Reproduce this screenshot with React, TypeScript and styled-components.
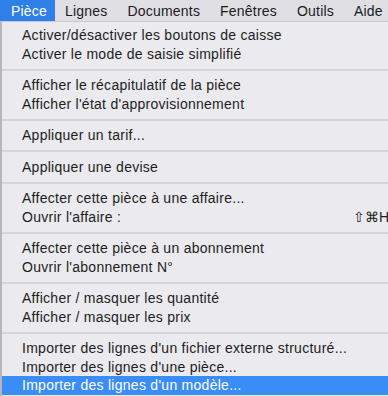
import React from 'react';
import styled, { createGlobalStyle } from 'styled-components';

const GlobalStyle = createGlobalStyle`
  html, body {
    margin: 0;
    padding: 0;
    background: #eaeaef;
    overflow: hidden;
  }
  body {
    font-family: "Liberation Sans", Arial, sans-serif;
    -webkit-font-smoothing: antialiased;
  }
`;

type Item = { label: string; shortcut?: string; active?: boolean };

const groups: Item[][] = [
  [
    { label: 'Activer/désactiver les boutons de caisse' },
    { label: 'Activer le mode de saisie simplifié' },
  ],
  [
    { label: 'Afficher le récapitulatif de la pièce' },
    { label: "Afficher l'état d'approvisionnement" },
  ],
  [{ label: 'Appliquer un tarif...' }],
  [{ label: 'Appliquer une devise' }],
  [
    { label: 'Affecter cette pièce à une affaire...' },
    { label: "Ouvrir l'affaire :", shortcut: '⇧⌘H' },
  ],
  [
    { label: 'Affecter cette pièce à un abonnement' },
    { label: "Ouvrir l'abonnement N°" },
  ],
  [
    { label: 'Afficher / masquer les quantité' },
    { label: 'Afficher / masquer les prix' },
  ],
  [
    { label: "Importer des lignes d'un fichier externe structuré..." },
    { label: "Importer des lignes d'une pièce..." },
    { label: "Importer des lignes d'un modèle...", active: true },
  ],
];

const menus = ['Pièce', 'Lignes', 'Documents', 'Fenêtres', 'Outils', 'Aide'];

function App() {
  return (
    <>
      <GlobalStyle />
      <Screen>
        <MenuBar>
          {menus.map((m, i) => (
            <BarItem key={m} $open={i === 0}>
              {m}
            </BarItem>
          ))}
        </MenuBar>
        <Dropdown>
          {groups.map((group, gi) => (
            <React.Fragment key={gi}>
              {gi > 0 && <Separator />}
              {group.map((item) => (
                <Row key={item.label} $active={item.active}>
                  <span>{item.label}</span>
                  {item.shortcut && <Shortcut>{item.shortcut}</Shortcut>}
                </Row>
              ))}
            </React.Fragment>
          ))}
        </Dropdown>
      </Screen>
    </>
  );
}

const Screen = styled.div`
  width: 388px;
  height: 396px;
  display: flex;
  flex-direction: column;
  background: #eaeaef;
  border-left: 2px solid #b9b6b8;
  box-sizing: border-box;
`;

const MenuBar = styled.div`
  height: 22px;
  display: flex;
  align-items: stretch;
  background: #dfdfe4;
  border-bottom: 1px solid #c9c9ce;
  margin-left: -2px;
  box-sizing: border-box;
`;

const BarItem = styled.div<{ $open?: boolean }>`
  display: flex;
  align-items: center;
  padding: ${(p) => (p.$open ? '0 8px 0 11px' : '0 10px')};
  font-size: 14px;
  letter-spacing: 0.2px;
  color: ${(p) => (p.$open ? '#ffffff' : '#1c1c1e')};
  background: ${(p) => (p.$open ? '#2f7fe8' : 'transparent')};
`;

const Dropdown = styled.div`
  flex: 1;
  padding-top: 4px;
  display: flex;
  flex-direction: column;
`;

const Row = styled.div<{ $active?: boolean }>`
  height: 18.5px;
  display: flex;
  align-items: center;
  justify-content: space-between;
  padding-left: 20px;
  font-size: 14px;
  letter-spacing: 0.27px;
  white-space: nowrap;
  color: ${(p) => (p.$active ? '#ffffff' : '#1e1e20')};
  background: ${(p) => (p.$active ? '#3a8df6' : 'transparent')};
`;

const Shortcut = styled.span`
  font-size: 14px;
  letter-spacing: 0;
  margin-right: -1px;
`;

const Separator = styled.div`
  height: 13px;
  display: flex;
  align-items: center;

  &::after {
    content: '';
    flex: 1;
    height: 2px;
    background: #d4d4d9;
  }
`;

export default App;
